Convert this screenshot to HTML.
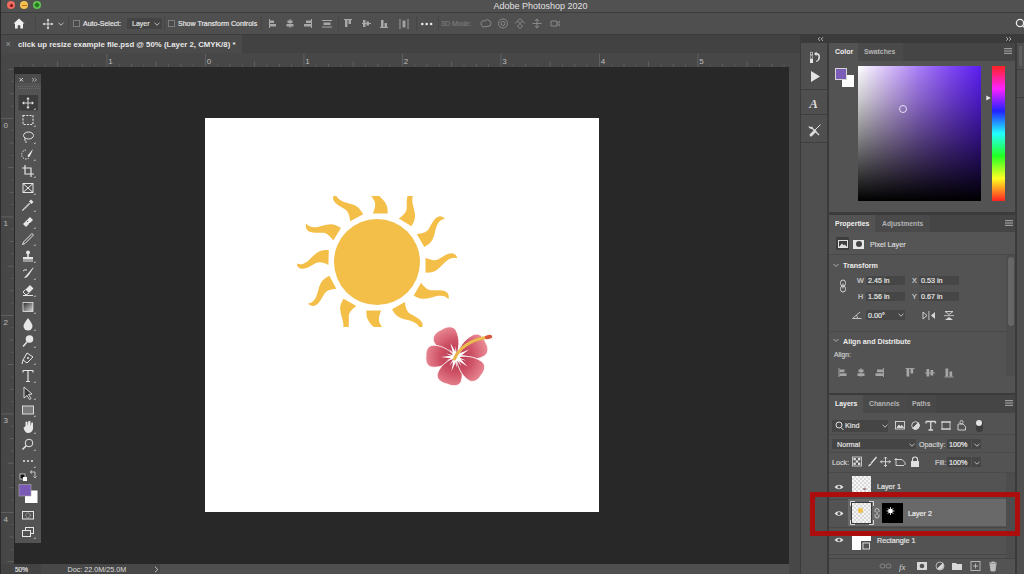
<!DOCTYPE html>
<html><head><meta charset="utf-8">
<style>
*{margin:0;padding:0;box-sizing:border-box}
html,body{width:1024px;height:574px;overflow:hidden;background:#282828;font-family:"Liberation Sans",sans-serif;color:#d8d8d8}
.a{position:absolute}
.t{position:absolute;white-space:nowrap;line-height:1}
#title{left:0;top:0;width:1024px;height:13px;background:#515151;border-bottom:1px solid #3c3c3c}
#opts{left:0;top:13px;width:1024px;height:21px;background:#4f4f4f}
#tabs{left:0;top:34px;width:1024px;height:19px;background:#424242;border-top:1px solid #3c3c3c}
#tab1{left:0;top:35px;width:242px;height:18px;background:#4a4a4a}
#rulerT{left:0;top:53px;width:790px;height:14px;background:#474747}
#rulerL{left:0;top:54px;width:14px;height:510px;background:#474747}
#status{left:0;top:564px;width:789px;height:10px;background:#474747}
#doc{left:205px;top:118px;width:394px;height:394px;background:#fff}
#vscroll{left:789px;top:53px;width:11px;height:521px;background:#474747}
#dock{left:800px;top:34px;width:224px;height:540px;background:#3b3b3b}
#iconcol{left:801px;top:43px;width:26px;height:531px;background:#4e4e4e}
#colorp{left:829px;top:43px;width:186px;height:169px;background:#535353}
#propp{left:829px;top:214px;width:186px;height:178px;background:#535353}
#layersp{left:829px;top:394px;width:186px;height:180px;background:#535353}
#tools{left:15px;top:74px;width:26px;height:469px;background:#535353}
.n{transform:scaleX(0.9);transform-origin:0 0;-webkit-text-stroke:0.2px currentColor}
.b{transform:scaleX(0.85);transform-origin:0 0;font-weight:bold}
.sep{position:absolute;width:1px;background:#464646;top:16px;height:15px}
</style></head>
<body>
<!-- TITLE BAR -->
<div id="title" class="a"></div>
<div class="a" style="left:7px;top:1px;width:8px;height:8px;border-radius:50%;background:#ee6b60"><div class="a" style="left:2.5px;top:2.5px;width:3px;height:3px;border-radius:50%;background:#7a1010"></div></div>
<div class="a" style="left:20px;top:1px;width:8px;height:8px;border-radius:50%;background:#f5c04f"><div class="a" style="left:1.5px;top:3.5px;width:5px;height:1px;background:#b07a10"></div></div>
<div class="a" style="left:33px;top:1px;width:8px;height:8px;border-radius:50%;background:#62c554"><div class="a" style="left:2px;top:2px;width:4px;height:4px;background:#1e7a1a;transform:rotate(45deg)"></div></div>
<div class="t" style="left:493.5px;top:2px;font-size:9px;color:#e0e0e0">Adobe Photoshop 2020</div>

<!-- OPTIONS BAR -->
<div id="opts" class="a"></div>
<div class="sep" style="left:35px"></div>
<div class="sep" style="left:68px"></div>
<div class="sep" style="left:164px"></div>
<div class="sep" style="left:261px"></div>
<div class="sep" style="left:338px"></div>
<div class="sep" style="left:416px"></div>
<div class="sep" style="left:438px"></div>
<svg class="a" style="left:13px;top:18px" width="12" height="11" viewBox="0 0 12 11"><path d="M6 0.5 L11.5 5.5 L10 5.5 L10 10.5 L7.3 10.5 L7.3 7.3 L4.7 7.3 L4.7 10.5 L2 10.5 L2 5.5 L0.5 5.5 Z" fill="#f0f0f0"/></svg>
<svg class="a" style="left:41.5px;top:18px" width="12" height="12" viewBox="0 0 12 12"><path d="M6 2V10M2 6H10" stroke="#e8e8e8" stroke-width="0.9"/><path d="M6 0.5L7.6 2.6H4.4Z M6 11.5L7.6 9.4H4.4Z M0.5 6L2.6 4.4V7.6Z M11.5 6L9.4 4.4V7.6Z" fill="#e8e8e8"/></svg>
<svg class="a" style="left:58px;top:22px" width="6" height="4" viewBox="0 0 6 4"><path d="M0.5 0.8L3 3.2L5.5 0.8" fill="none" stroke="#c8c8c8" stroke-width="0.9"/></svg>
<div class="a" style="left:73px;top:20px;width:7px;height:7px;border:1px solid #7e7e7e;background:#4a4a4a"></div>
<div class="t n" style="left:83px;top:19.5px;font-size:7.8px;color:#e6e6e6">Auto-Select:</div>
<div class="a" style="left:127px;top:17.5px;width:35px;height:11.5px;background:#434343;border-radius:1px"></div>
<div class="t n" style="left:131.5px;top:19.5px;font-size:7.8px;color:#e0e0e0">Layer</div>
<svg class="a" style="left:154px;top:22px" width="6" height="4" viewBox="0 0 6 4"><path d="M0.5 0.8L3 3.2L5.5 0.8" fill="none" stroke="#c8c8c8" stroke-width="0.9"/></svg>
<div class="a" style="left:168px;top:20px;width:7px;height:7px;border:1px solid #7e7e7e;background:#4a4a4a"></div>
<div class="t n" style="left:177.5px;top:19.5px;font-size:7.8px;color:#e6e6e6">Show Transform Controls</div>
<svg class="a" style="left:268px;top:19px" width="120" height="10" viewBox="0 0 120 10" fill="#a8a8a8">
 <rect x="1" y="0" width="1" height="9"/><rect x="2" y="1.5" width="4" height="2.5"/><rect x="2" y="5" width="6" height="2.5"/>
 <rect x="21.5" y="0" width="1" height="9"/><rect x="19.5" y="1.5" width="5" height="2.5"/><rect x="18.5" y="5" width="7" height="2.5"/>
 <rect x="43" y="0" width="1" height="9"/><rect x="38" y="1.5" width="5" height="2.5"/><rect x="36" y="5" width="7" height="2.5"/>
 <rect x="54" y="1" width="10" height="1"/><rect x="55.5" y="3.5" width="7" height="2.5"/><rect x="54" y="7.5" width="10" height="1"/>
 <rect x="76" y="0" width="8" height="1"/><rect x="77" y="1" width="2.5" height="7"/><rect x="80.5" y="1" width="2.5" height="4"/>
 <rect x="94" y="4" width="9" height="1"/><rect x="95" y="1" width="2.5" height="7"/><rect x="98.5" y="2.5" width="2.5" height="4"/>
 <rect x="112" y="8" width="8" height="1"/><rect x="113" y="1" width="2.5" height="7"/><rect x="116.5" y="4" width="2.5" height="4"/>
</svg>
<svg class="a" style="left:399px;top:19px" width="10" height="10" viewBox="0 0 10 10" fill="#a0a0a0"><rect x="0.5" y="0" width="1" height="10"/><rect x="8.5" y="0" width="1" height="10"/><rect x="3.5" y="1.5" width="3" height="7"/></svg>
<svg class="a" style="left:420px;top:21px" width="14" height="6" fill="#e8e8e8"><circle cx="2.3" cy="3" r="1.3"/><circle cx="6.7" cy="3" r="1.3"/><circle cx="11.1" cy="3" r="1.3"/></svg>
<div class="t n" style="left:440.5px;top:19.5px;font-size:7.8px;color:#7a7a7a">3D Mode:</div>
<svg class="a" style="left:480px;top:17px" width="80" height="13" viewBox="0 0 80 13" fill="none" stroke="#8a8a8a" stroke-width="1">
 <path d="M1 7 Q1 3 5 4 Q7 1 10 4 Q12 6 10 9 L3 10 Q1 9 1 7Z"/>
 <circle cx="23" cy="6.5" r="4.5"/><circle cx="23" cy="6.5" r="2"/>
 <path d="M40 1.5L42.5 4L40 6.5L37.5 4Z M40 6.5L42.5 9L40 11.5L37.5 9Z M35 6.5L37.5 4 M45 6.5L42.5 4"/>
 <path d="M57 2V11 M52.5 6.5H61.5 M55 4L57 2L59 4 M55 9L57 11L59 9"/>
 <path d="M71 4H77V9H71Z M77 6.5L80 4V9Z"/>
</svg>
<svg class="a" style="left:1015px;top:18px" width="12" height="12" viewBox="0 0 12 12" fill="none" stroke="#e8e8e8" stroke-width="1.3"><circle cx="5" cy="5" r="3.6"/><path d="M7.6 7.6L11 11"/></svg>

<!-- TAB BAR -->
<div id="tabs" class="a"></div>
<div id="tab1" class="a"></div>
<div class="t" style="left:5.5px;top:39.5px;font-size:9px;color:#9a9a9a">×</div>
<div class="t" style="left:17.5px;top:40.5px;font-size:8px;font-weight:bold;color:#e8e8e8;transform:scaleX(0.975);transform-origin:0 0">click up resize example file.psd @ 50% (Layer 2, CMYK/8) *</div>

<!-- RULERS -->
<div id="rulerT" class="a"></div>
<div id="rulerL" class="a"></div>
<svg class="a" style="left:0;top:54px" width="789" height="13"><rect x="20.3" y="10.5" width="0.8" height="2" fill="#666666"/><rect x="32.6" y="9.5" width="0.8" height="3" fill="#666666"/><rect x="44.9" y="10.5" width="0.8" height="2" fill="#666666"/><rect x="57.2" y="7.5" width="0.8" height="5" fill="#666666"/><rect x="69.6" y="10.5" width="0.8" height="2" fill="#666666"/><rect x="81.9" y="9.5" width="0.8" height="3" fill="#666666"/><rect x="94.2" y="10.5" width="0.8" height="2" fill="#666666"/><rect x="106.5" y="-0.5" width="0.8" height="13" fill="#666666"/><text x="108.3" y="10" font-size="8" fill="#bdbdbd" font-family="Liberation Sans">1</text><rect x="118.8" y="10.5" width="0.8" height="2" fill="#666666"/><rect x="131.1" y="9.5" width="0.8" height="3" fill="#666666"/><rect x="143.4" y="10.5" width="0.8" height="2" fill="#666666"/><rect x="155.8" y="7.5" width="0.8" height="5" fill="#666666"/><rect x="168.1" y="10.5" width="0.8" height="2" fill="#666666"/><rect x="180.4" y="9.5" width="0.8" height="3" fill="#666666"/><rect x="192.7" y="10.5" width="0.8" height="2" fill="#666666"/><rect x="205.0" y="-0.5" width="0.8" height="13" fill="#666666"/><text x="206.8" y="10" font-size="8" fill="#bdbdbd" font-family="Liberation Sans">0</text><rect x="217.3" y="10.5" width="0.8" height="2" fill="#666666"/><rect x="229.6" y="9.5" width="0.8" height="3" fill="#666666"/><rect x="241.9" y="10.5" width="0.8" height="2" fill="#666666"/><rect x="254.2" y="7.5" width="0.8" height="5" fill="#666666"/><rect x="266.6" y="10.5" width="0.8" height="2" fill="#666666"/><rect x="278.9" y="9.5" width="0.8" height="3" fill="#666666"/><rect x="291.2" y="10.5" width="0.8" height="2" fill="#666666"/><rect x="303.5" y="-0.5" width="0.8" height="13" fill="#666666"/><text x="305.3" y="10" font-size="8" fill="#bdbdbd" font-family="Liberation Sans">1</text><rect x="315.8" y="10.5" width="0.8" height="2" fill="#666666"/><rect x="328.1" y="9.5" width="0.8" height="3" fill="#666666"/><rect x="340.4" y="10.5" width="0.8" height="2" fill="#666666"/><rect x="352.8" y="7.5" width="0.8" height="5" fill="#666666"/><rect x="365.1" y="10.5" width="0.8" height="2" fill="#666666"/><rect x="377.4" y="9.5" width="0.8" height="3" fill="#666666"/><rect x="389.7" y="10.5" width="0.8" height="2" fill="#666666"/><rect x="402.0" y="-0.5" width="0.8" height="13" fill="#666666"/><text x="403.8" y="10" font-size="8" fill="#bdbdbd" font-family="Liberation Sans">2</text><rect x="414.3" y="10.5" width="0.8" height="2" fill="#666666"/><rect x="426.6" y="9.5" width="0.8" height="3" fill="#666666"/><rect x="438.9" y="10.5" width="0.8" height="2" fill="#666666"/><rect x="451.2" y="7.5" width="0.8" height="5" fill="#666666"/><rect x="463.6" y="10.5" width="0.8" height="2" fill="#666666"/><rect x="475.9" y="9.5" width="0.8" height="3" fill="#666666"/><rect x="488.2" y="10.5" width="0.8" height="2" fill="#666666"/><rect x="500.5" y="-0.5" width="0.8" height="13" fill="#666666"/><text x="502.3" y="10" font-size="8" fill="#bdbdbd" font-family="Liberation Sans">3</text><rect x="512.8" y="10.5" width="0.8" height="2" fill="#666666"/><rect x="525.1" y="9.5" width="0.8" height="3" fill="#666666"/><rect x="537.4" y="10.5" width="0.8" height="2" fill="#666666"/><rect x="549.8" y="7.5" width="0.8" height="5" fill="#666666"/><rect x="562.1" y="10.5" width="0.8" height="2" fill="#666666"/><rect x="574.4" y="9.5" width="0.8" height="3" fill="#666666"/><rect x="586.7" y="10.5" width="0.8" height="2" fill="#666666"/><rect x="599.0" y="-0.5" width="0.8" height="13" fill="#666666"/><text x="600.8" y="10" font-size="8" fill="#bdbdbd" font-family="Liberation Sans">4</text><rect x="611.3" y="10.5" width="0.8" height="2" fill="#666666"/><rect x="623.6" y="9.5" width="0.8" height="3" fill="#666666"/><rect x="635.9" y="10.5" width="0.8" height="2" fill="#666666"/><rect x="648.2" y="7.5" width="0.8" height="5" fill="#666666"/><rect x="660.6" y="10.5" width="0.8" height="2" fill="#666666"/><rect x="672.9" y="9.5" width="0.8" height="3" fill="#666666"/><rect x="685.2" y="10.5" width="0.8" height="2" fill="#666666"/><rect x="697.5" y="-0.5" width="0.8" height="13" fill="#666666"/><text x="699.3" y="10" font-size="8" fill="#bdbdbd" font-family="Liberation Sans">5</text><rect x="709.8" y="10.5" width="0.8" height="2" fill="#666666"/><rect x="722.1" y="9.5" width="0.8" height="3" fill="#666666"/><rect x="734.4" y="10.5" width="0.8" height="2" fill="#666666"/><rect x="746.8" y="7.5" width="0.8" height="5" fill="#666666"/><rect x="759.1" y="10.5" width="0.8" height="2" fill="#666666"/><rect x="771.4" y="9.5" width="0.8" height="3" fill="#666666"/><rect x="783.7" y="10.5" width="0.8" height="2" fill="#666666"/></svg>
<svg class="a" style="left:0;top:54px" width="14" height="510"><rect x="7.5" y="14.8" width="6" height="0.8" fill="#666666"/><rect x="11.5" y="27.1" width="2" height="0.8" fill="#666666"/><rect x="9.5" y="39.4" width="4" height="0.8" fill="#666666"/><rect x="11.5" y="51.7" width="2" height="0.8" fill="#666666"/><rect x="-0.5" y="64.0" width="14" height="0.8" fill="#666666"/><text x="3.5" y="73.8" font-size="8" fill="#bdbdbd" font-family="Liberation Sans">0</text><rect x="11.5" y="76.3" width="2" height="0.8" fill="#666666"/><rect x="9.5" y="88.6" width="4" height="0.8" fill="#666666"/><rect x="11.5" y="100.9" width="2" height="0.8" fill="#666666"/><rect x="7.5" y="113.2" width="6" height="0.8" fill="#666666"/><rect x="11.5" y="125.6" width="2" height="0.8" fill="#666666"/><rect x="9.5" y="137.9" width="4" height="0.8" fill="#666666"/><rect x="11.5" y="150.2" width="2" height="0.8" fill="#666666"/><rect x="-0.5" y="162.5" width="14" height="0.8" fill="#666666"/><text x="3.5" y="172.3" font-size="8" fill="#bdbdbd" font-family="Liberation Sans">1</text><rect x="11.5" y="174.8" width="2" height="0.8" fill="#666666"/><rect x="9.5" y="187.1" width="4" height="0.8" fill="#666666"/><rect x="11.5" y="199.4" width="2" height="0.8" fill="#666666"/><rect x="7.5" y="211.8" width="6" height="0.8" fill="#666666"/><rect x="11.5" y="224.1" width="2" height="0.8" fill="#666666"/><rect x="9.5" y="236.4" width="4" height="0.8" fill="#666666"/><rect x="11.5" y="248.7" width="2" height="0.8" fill="#666666"/><rect x="-0.5" y="261.0" width="14" height="0.8" fill="#666666"/><text x="3.5" y="270.8" font-size="8" fill="#bdbdbd" font-family="Liberation Sans">2</text><rect x="11.5" y="273.3" width="2" height="0.8" fill="#666666"/><rect x="9.5" y="285.6" width="4" height="0.8" fill="#666666"/><rect x="11.5" y="297.9" width="2" height="0.8" fill="#666666"/><rect x="7.5" y="310.2" width="6" height="0.8" fill="#666666"/><rect x="11.5" y="322.6" width="2" height="0.8" fill="#666666"/><rect x="9.5" y="334.9" width="4" height="0.8" fill="#666666"/><rect x="11.5" y="347.2" width="2" height="0.8" fill="#666666"/><rect x="-0.5" y="359.5" width="14" height="0.8" fill="#666666"/><text x="3.5" y="369.3" font-size="8" fill="#bdbdbd" font-family="Liberation Sans">3</text><rect x="11.5" y="371.8" width="2" height="0.8" fill="#666666"/><rect x="9.5" y="384.1" width="4" height="0.8" fill="#666666"/><rect x="11.5" y="396.4" width="2" height="0.8" fill="#666666"/><rect x="7.5" y="408.8" width="6" height="0.8" fill="#666666"/><rect x="11.5" y="421.1" width="2" height="0.8" fill="#666666"/><rect x="9.5" y="433.4" width="4" height="0.8" fill="#666666"/><rect x="11.5" y="445.7" width="2" height="0.8" fill="#666666"/><rect x="-0.5" y="458.0" width="14" height="0.8" fill="#666666"/><text x="3.5" y="467.8" font-size="8" fill="#bdbdbd" font-family="Liberation Sans">4</text><rect x="11.5" y="470.3" width="2" height="0.8" fill="#666666"/><rect x="9.5" y="482.6" width="4" height="0.8" fill="#666666"/><rect x="11.5" y="494.9" width="2" height="0.8" fill="#666666"/><rect x="7.5" y="507.2" width="6" height="0.8" fill="#666666"/></svg>

<!-- STATUS -->
<div id="status" class="a"></div>
<div class="a" style="left:0;top:564px;width:41px;height:10px;background:#434343"></div>
<div class="a" style="left:41px;top:564px;width:119px;height:10px;background:#484848"></div>
<div class="a" style="left:160px;top:564px;width:629px;height:10px;background:#4f4f4f"></div>
<div class="t n" style="left:14.5px;top:566px;font-size:7.2px;color:#e0e0e0">50%</div>
<div class="t" style="left:67.5px;top:566px;font-size:7.2px;color:#dcdcdc">Doc: 22.0M/25.0M</div>
<svg class="a" style="left:154px;top:566px" width="5" height="7"><path d="M1 0.8L3.8 3.5L1 6.2" fill="none" stroke="#d0d0d0" stroke-width="0.9"/></svg>
<div class="a" style="left:0;top:0;width:1px;height:574px;background:#2c2a2e"></div>

<!-- DOCUMENT -->
<div id="doc" class="a"></div>
<svg class="a" style="left:205px;top:118px" width="394" height="394"><defs><clipPath id="sc"><rect x="92" y="78" width="160" height="131"/></clipPath></defs><g clip-path="url(#sc)"><circle cx="172" cy="144" r="43" fill="#f4bf49"/><path d="M48.5 -3.4 C53 -1.8 57 -0.5 61 -2 C66 -4.5 70 -7.5 75 -7.5 C78 -7.3 80 -5 80.5 -2.8 C77 -4 74 -3.5 70 -1 C66 1.5 63 6.5 57 8.8 C54 9.8 51 9.9 48.5 9.8 Z" fill="#f4bf49" transform="translate(172,144) rotate(0) translate(0,3) scale(1,1.12) translate(0,-3)"/><path d="M48.5 -3.4 C53 -1.8 57 -0.5 61 -2 C66 -4.5 70 -7.5 75 -7.5 C78 -7.3 80 -5 80.5 -2.8 C77 -4 74 -3.5 70 -1 C66 1.5 63 6.5 57 8.8 C54 9.8 51 9.9 48.5 9.8 Z" fill="#f4bf49" transform="translate(172,144) rotate(30) translate(0,3) scale(1,1.12) translate(0,-3)"/><path d="M48.5 -3.4 C53 -1.8 57 -0.5 61 -2 C66 -4.5 70 -7.5 75 -7.5 C78 -7.3 80 -5 80.5 -2.8 C77 -4 74 -3.5 70 -1 C66 1.5 63 6.5 57 8.8 C54 9.8 51 9.9 48.5 9.8 Z" fill="#f4bf49" transform="translate(172,144) rotate(60) translate(0,3) scale(1,1.12) translate(0,-3)"/><path d="M48.5 -3.4 C53 -1.8 57 -0.5 61 -2 C66 -4.5 70 -7.5 75 -7.5 C78 -7.3 80 -5 80.5 -2.8 C77 -4 74 -3.5 70 -1 C66 1.5 63 6.5 57 8.8 C54 9.8 51 9.9 48.5 9.8 Z" fill="#f4bf49" transform="translate(172,144) rotate(90) translate(0,3) scale(1,1.12) translate(0,-3)"/><path d="M48.5 -3.4 C53 -1.8 57 -0.5 61 -2 C66 -4.5 70 -7.5 75 -7.5 C78 -7.3 80 -5 80.5 -2.8 C77 -4 74 -3.5 70 -1 C66 1.5 63 6.5 57 8.8 C54 9.8 51 9.9 48.5 9.8 Z" fill="#f4bf49" transform="translate(172,144) rotate(120) translate(0,3) scale(1,1.12) translate(0,-3)"/><path d="M48.5 -3.4 C53 -1.8 57 -0.5 61 -2 C66 -4.5 70 -7.5 75 -7.5 C78 -7.3 80 -5 80.5 -2.8 C77 -4 74 -3.5 70 -1 C66 1.5 63 6.5 57 8.8 C54 9.8 51 9.9 48.5 9.8 Z" fill="#f4bf49" transform="translate(172,144) rotate(151.5) translate(0,3) scale(1,1.12) translate(0,-3)"/><path d="M48.5 -3.4 C53 -1.8 57 -0.5 61 -2 C66 -4.5 70 -7.5 75 -7.5 C78 -7.3 80 -5 80.5 -2.8 C77 -4 74 -3.5 70 -1 C66 1.5 63 6.5 57 8.8 C54 9.8 51 9.9 48.5 9.8 Z" fill="#f4bf49" transform="translate(172,144) rotate(181.5) translate(0,3) scale(1,1.12) translate(0,-3)"/><path d="M48.5 -3.4 C53 -1.8 57 -0.5 61 -2 C66 -4.5 70 -7.5 75 -7.5 C78 -7.3 80 -5 80.5 -2.8 C77 -4 74 -3.5 70 -1 C66 1.5 63 6.5 57 8.8 C54 9.8 51 9.9 48.5 9.8 Z" fill="#f4bf49" transform="translate(172,144) rotate(211.0) translate(0,3) scale(1,1.12) translate(0,-3)"/><path d="M48.5 -3.4 C53 -1.8 57 -0.5 61 -2 C66 -4.5 70 -7.5 75 -7.5 C78 -7.3 80 -5 80.5 -2.8 C77 -4 74 -3.5 70 -1 C66 1.5 63 6.5 57 8.8 C54 9.8 51 9.9 48.5 9.8 Z" fill="#f4bf49" transform="translate(172,144) rotate(241.5) translate(0,3) scale(1,1.12) translate(0,-3)"/><path d="M48.5 -3.4 C53 -1.8 57 -0.5 61 -2 C66 -4.5 70 -7.5 75 -7.5 C78 -7.3 80 -5 80.5 -2.8 C77 -4 74 -3.5 70 -1 C66 1.5 63 6.5 57 8.8 C54 9.8 51 9.9 48.5 9.8 Z" fill="#f4bf49" transform="translate(172,144) rotate(270) translate(0,3) scale(1,1.12) translate(0,-3)"/><path d="M48.5 -3.4 C53 -1.8 57 -0.5 61 -2 C66 -4.5 70 -7.5 75 -7.5 C78 -7.3 80 -5 80.5 -2.8 C77 -4 74 -3.5 70 -1 C66 1.5 63 6.5 57 8.8 C54 9.8 51 9.9 48.5 9.8 Z" fill="#f4bf49" transform="translate(172,144) rotate(301.5) translate(0,3) scale(1,1.12) translate(0,-3)"/><path d="M48.5 -3.4 C53 -1.8 57 -0.5 61 -2 C66 -4.5 70 -7.5 75 -7.5 C78 -7.3 80 -5 80.5 -2.8 C77 -4 74 -3.5 70 -1 C66 1.5 63 6.5 57 8.8 C54 9.8 51 9.9 48.5 9.8 Z" fill="#f4bf49" transform="translate(172,144) rotate(330) translate(0,3) scale(1,1.12) translate(0,-3)"/></g><defs><radialGradient id="pg" gradientUnits="userSpaceOnUse" cx="0" cy="0" r="32"><stop offset="0" stop-color="#b3344c"/><stop offset="0.5" stop-color="#cd5064"/><stop offset="1" stop-color="#e98a94"/></radialGradient></defs><path d="M0 0 C6.2 -6.9 14.0 -12.5 23.2 -12.5 C29.4 -12.5 31.6 -6.2 31.0 0 C31.6 6.2 29.4 12.5 23.2 12.5 C14.0 12.5 6.2 6.9 0 0Z" fill="url(#pg)" stroke="#fff" stroke-width="0.8" transform="translate(251,239) rotate(-118)"/><path d="M0 0 C6.6 -6.6 14.8 -12.0 24.8 -12.0 C31.3 -12.0 33.7 -6.0 33.0 0 C33.7 6.0 31.3 12.0 24.8 12.0 C14.8 12.0 6.6 6.6 0 0Z" fill="url(#pg)" stroke="#fff" stroke-width="0.8" transform="translate(251,239) rotate(-27)"/><path d="M0 0 C6.0 -6.1 13.5 -11.0 22.5 -11.0 C28.5 -11.0 30.6 -5.5 30.0 0 C30.6 5.5 28.5 11.0 22.5 11.0 C13.5 11.0 6.0 6.1 0 0Z" fill="url(#pg)" stroke="#fff" stroke-width="0.8" transform="translate(251,239) rotate(182)"/><path d="M0 0 C5.7 -6.9 12.8 -12.5 21.4 -12.5 C27.1 -12.5 29.1 -6.2 28.5 0 C29.1 6.2 27.1 12.5 21.4 12.5 C12.8 12.5 5.7 6.9 0 0Z" fill="url(#pg)" stroke="#fff" stroke-width="0.8" transform="translate(251,239) rotate(108)"/><path d="M0 0 C6.2 -6.3 14.0 -11.5 23.2 -11.5 C29.4 -11.5 31.6 -5.8 31.0 0 C31.6 5.8 29.4 11.5 23.2 11.5 C14.0 11.5 6.2 6.3 0 0Z" fill="url(#pg)" stroke="#fff" stroke-width="0.8" transform="translate(251,239) rotate(36)"/><path d="M252.9 238.3 L245.4 225.1 L249.1 239.7Z" fill="#fff"/><path d="M251.9 238.2 L243.6 230.8 L250.1 239.8Z" fill="#fff"/><path d="M252.2 239.0 L250.6 228.0 L249.8 239.0Z" fill="#fff"/><path d="M252.0 240.7 L264.0 231.5 L250.0 237.3Z" fill="#fff"/><path d="M251.9 239.8 L258.1 230.6 L250.1 238.2Z" fill="#fff"/><path d="M251.2 240.2 L261.8 237.1 L250.8 237.8Z" fill="#fff"/><path d="M251.0 237.0 L236.0 239.0 L251.0 241.0Z" fill="#fff"/><path d="M250.6 237.9 L240.7 242.8 L251.4 240.1Z" fill="#fff"/><path d="M251.4 237.9 L240.7 235.2 L250.6 240.1Z" fill="#fff"/><path d="M249.1 238.4 L246.4 253.3 L252.9 239.6Z" fill="#fff"/><path d="M249.8 239.0 L251.4 250.0 L252.2 239.0Z" fill="#fff"/><path d="M250.1 238.3 L244.2 247.7 L251.9 239.7Z" fill="#fff"/><path d="M249.7 240.5 L262.5 248.6 L252.3 237.5Z" fill="#fff"/><path d="M250.6 240.1 L261.3 242.8 L251.4 237.9Z" fill="#fff"/><path d="M250.0 239.6 L256.5 248.5 L252.0 238.4Z" fill="#fff"/><circle cx="251" cy="239" r="4" fill="#fff"/><path d="M249.5 241 C253 231 265 222 281 219.5" stroke="#e9b447" stroke-width="3" fill="none" stroke-linecap="round"/><path d="M253 234 C259 226 267 222 281 219.5" stroke="#f0c85a" stroke-width="1" fill="none"/><ellipse cx="283.5" cy="219" rx="3.8" ry="2.1" fill="#d8553f" transform="rotate(-10 283.5 219)"/></svg>

<!-- DOCK -->
<div id="vscroll" class="a"></div>
<div id="dock" class="a"></div>
<!-- dock header -->
<div class="a" style="left:800px;top:34px;width:224px;height:9px;background:#3b3b3b"></div>
<svg class="a" style="left:817px;top:36px" width="8" height="6" viewBox="0 0 8 6" fill="none" stroke="#c4c4c4" stroke-width="0.9"><path d="M3 1.2L1.2 3L3 4.8M6 1.2L4.2 3L6 4.8"/></svg>
<svg class="a" style="left:1005px;top:36px" width="8" height="6" viewBox="0 0 8 6" fill="none" stroke="#c4c4c4" stroke-width="0.9"><path d="M1.2 1.2L3 3L1.2 4.8M4.2 1.2L6 3L4.2 4.8"/></svg>
<!-- icon column -->
<div class="a" style="left:801px;top:43px;width:26px;height:531px;background:#4f4f4f"></div>
<div class="a" style="left:801px;top:89px;width:26px;height:1px;background:#3e3e3e"></div>
<div class="a" style="left:801px;top:114px;width:26px;height:1px;background:#3e3e3e"></div>
<div class="a" style="left:801px;top:142px;width:26px;height:1px;background:#3e3e3e"></div>
<svg class="a" style="left:801px;top:43px" width="26" height="100" fill="#e4e4e4">
 <rect x="9" y="9" width="3" height="3"/><rect x="9" y="12.5" width="3" height="3"/><rect x="9" y="16" width="3" height="4"/>
 <rect x="9.5" y="9.5" width="2" height="2" fill="#4f4f4f"/><rect x="9.5" y="13" width="2" height="2" fill="#4f4f4f"/>
 <path d="M13 11 L15.5 8.5 L15.5 10 Q19 10 19 14 Q19 18 15 19 L15 18 Q17.5 17 17.5 14 Q17.5 11.5 15.5 11.5 L15.5 13Z"/>
 <path d="M10 28 L19 33.5 L10 39Z"/>
 <text x="8.3" y="65.3" font-family="Liberation Serif" font-weight="bold" font-style="italic" font-size="13" fill="#dcdcdc">A</text>
 <path d="M10.5 84.5 L18 92" stroke="#dcdcdc" stroke-width="1.3" fill="none"/>
 <path d="M7.5 83 A3 3 0 0 0 12 85.5 L11 83.5 L9.5 84 Z" fill="#dcdcdc"/>
 <path d="M19.5 81.5 L13.5 87.5" stroke="#dcdcdc" stroke-width="1" fill="none"/>
 <path d="M13.8 86.2 L9 91 A1.4 1.4 0 0 0 11 93 L15.8 88.2Z" fill="#dcdcdc"/>
</svg>
<!-- separator column between icon col and panels -->
<div class="a" style="left:827px;top:43px;width:2px;height:531px;background:#3b3b3b"></div>
<!-- right edge column -->
<div class="a" style="left:1015px;top:43px;width:2px;height:531px;background:#3b3b3b"></div>
<div class="a" style="left:1017px;top:43px;width:7px;height:531px;background:#4f4f4f"></div>
<div class="a" style="left:1017px;top:69px;width:7px;height:1px;background:#3f3f3f"></div>
<div class="a" style="left:1017px;top:97px;width:7px;height:1px;background:#3f3f3f"></div>
<div class="a" style="left:1019px;top:46px;width:3px;height:20px;background:#5e5e5e;border-radius:1px"></div>

<!-- ================= COLOR PANEL ================= -->
<div class="a" style="left:829px;top:43px;width:186px;height:169px;background:#535353"></div>
<div class="a" style="left:858px;top:43px;width:157px;height:18px;background:#454545"></div>
<div class="a" style="left:858px;top:43px;width:45px;height:18px;background:#4a4a4a"></div>
<div class="t b" style="left:834.5px;top:48.18px;font-size:7.4px;color:#f0f0f0;transform:scaleX(0.942)">Color</div>
<div class="t b" style="left:864px;top:48.18px;font-size:7.4px;color:#b4b4b4;transform:scaleX(0.920)">Swatches</div>
<svg class="a" style="left:1004px;top:48px" width="9" height="7" fill="#9a9a9a"><rect x="0" y="0" width="8" height="1.2"/><rect x="0" y="2.4" width="8" height="1.2"/><rect x="0" y="4.8" width="8" height="1.2"/></svg>
<div class="a" style="left:842px;top:75px;width:12px;height:12px;background:#fff"></div>
<div class="a" style="left:835px;top:68px;width:12px;height:12px;background:#7b5cb6;border:1px solid #d4d4d4"></div>
<div class="a" style="left:858px;top:66px;width:123px;height:135px;background:linear-gradient(to bottom,rgba(0,0,0,0) 0%,rgba(0,0,0,.2) 25%,rgba(0,0,0,.45) 50%,rgba(0,0,0,.72) 75%,#000 100%),linear-gradient(to right,#fff 0%,#d6bcfb 25%,#a87cf7 50%,#8048f4 75%,#5a1ef0 100%)"></div>
<div class="a" style="left:899px;top:105px;width:8px;height:8px;border-radius:50%;border:1px solid #e6e0f0"></div>
<div class="a" style="left:992px;top:66px;width:13px;height:135px;background:linear-gradient(to bottom,#f22 0%,#f2f 16.7%,#22f 33.3%,#2ff 50%,#2f2 66.7%,#ff2 83.3%,#f22 100%)"></div>
<svg class="a" style="left:985.5px;top:95px" width="6" height="7"><path d="M0.3 0.5 L4.8 3 L0.3 5.5Z" fill="#e8e8e8"/></svg>

<!-- ================= PROPERTIES PANEL ================= -->
<div class="a" style="left:829px;top:215px;width:186px;height:178px;background:#535353"></div>
<div class="a" style="left:875px;top:215px;width:140px;height:17px;background:#454545"></div>
<div class="a" style="left:875px;top:215px;width:55px;height:17px;background:#4a4a4a"></div>
<div class="t b" style="left:834.5px;top:220.18px;font-size:7.4px;color:#f0f0f0;transform:scaleX(0.942)">Properties</div>
<div class="t b" style="left:881.5px;top:220.18px;font-size:7.4px;color:#b4b4b4;transform:scaleX(0.920)">Adjustments</div>
<svg class="a" style="left:1005px;top:220px" width="9" height="7" fill="#9a9a9a"><rect x="0" y="0" width="8" height="1.2"/><rect x="0" y="2.4" width="8" height="1.2"/><rect x="0" y="4.8" width="8" height="1.2"/></svg>
<div class="a" style="left:829px;top:232px;width:186px;height:22px;background:#555555"></div>
<div class="a" style="left:829px;top:253.5px;width:186px;height:1px;background:#484848"></div>
<div class="a" style="left:836px;top:237px;width:13px;height:13px;background:#3e3e3e"></div>
<svg class="a" style="left:838px;top:240px" width="10" height="8"><rect x="0.5" y="0.5" width="9" height="7" fill="none" stroke="#e0e0e0" stroke-width="1"/><path d="M1 7 L4 3.5 L6 5.5 L7 4.5 L9 7Z" fill="#e0e0e0"/></svg>
<div class="a" style="left:853px;top:240px;width:11px;height:8.5px;background:#e6e6e6"><div class="a" style="left:2.5px;top:1.2px;width:6px;height:6px;border-radius:50%;background:#444"></div></div>
<div class="t n" style="left:869.5px;top:241.01px;font-size:7.4px;color:#d8d8d8;transform:scaleX(0.973)">Pixel Layer</div>
<svg class="a" style="left:833px;top:263px" width="6" height="5"><path d="M0.5 1 L3 3.5 L5.5 1" fill="none" stroke="#bdbdbd" stroke-width="0.9"/></svg>
<div class="t b" style="left:842.5px;top:262px;font-size:7.6px;color:#ececec;transform:scaleX(0.94)">Transform</div>
<svg class="a" style="left:839px;top:279px" width="8" height="14" fill="none" stroke="#d0d0d0" stroke-width="1"><rect x="1.5" y="1" width="5" height="6" rx="2.5"/><rect x="1.5" y="7" width="5" height="6" rx="2.5"/><path d="M4 4.5V9.5"/></svg>
<div class="t n" style="left:856.5px;top:277.01px;font-size:7.4px;color:#cfcfcf;transform:scaleX(0.973)">W</div>
<div class="a" style="left:865.5px;top:275.5px;width:39.5px;height:9.5px;background:#464646"></div>
<div class="t n" style="left:868px;top:277.01px;font-size:7.4px;color:#e6e6e6;transform:scaleX(0.973)">2.45 in</div>
<div class="t n" style="left:912px;top:277.01px;font-size:7.4px;color:#cfcfcf;transform:scaleX(0.973)">X</div>
<div class="a" style="left:919px;top:275.5px;width:40px;height:9.5px;background:#464646"></div>
<div class="t n" style="left:921px;top:277.01px;font-size:7.4px;color:#e6e6e6;transform:scaleX(0.973)">0.53 in</div>
<div class="t n" style="left:857.5px;top:293.01px;font-size:7.4px;color:#cfcfcf;transform:scaleX(0.973)">H</div>
<div class="a" style="left:865.5px;top:291.5px;width:39.5px;height:9.5px;background:#464646"></div>
<div class="t n" style="left:868px;top:293.01px;font-size:7.4px;color:#e6e6e6;transform:scaleX(0.973)">1.56 in</div>
<div class="t n" style="left:912px;top:293.01px;font-size:7.4px;color:#cfcfcf;transform:scaleX(0.973)">Y</div>
<div class="a" style="left:919px;top:291.5px;width:40px;height:9.5px;background:#464646"></div>
<div class="t n" style="left:921px;top:293.01px;font-size:7.4px;color:#e6e6e6;transform:scaleX(0.973)">0.67 in</div>
<svg class="a" style="left:852px;top:311px" width="10" height="8" fill="none" stroke="#d0d0d0" stroke-width="0.9"><path d="M0.5 7.5 H9.5 M0.5 7.5 L8 1"/><path d="M5.5 7.5 Q5.5 5 4 4"/></svg>
<div class="a" style="left:865.5px;top:310px;width:30px;height:10px;background:#464646"></div>
<div class="a" style="left:896px;top:310px;width:9px;height:10px;background:#464646"></div>
<div class="t n" style="left:868px;top:311.51px;font-size:7.4px;color:#e6e6e6;transform:scaleX(0.973)">0.00°</div>
<svg class="a" style="left:898px;top:313px" width="6" height="4"><path d="M0.5 0.8L3 3.2L5.5 0.8" fill="none" stroke="#c8c8c8" stroke-width="0.9"/></svg>
<svg class="a" style="left:922px;top:310px" width="34" height="11" fill="#d8d8d8"><path d="M1 2 L5 5.5 L1 9Z" fill="none" stroke="#d8d8d8" stroke-width="0.9"/><rect x="6.5" y="1" width="0.8" height="9"/><path d="M13 2 L9 5.5 L13 9Z"/>
 <path d="M23 1.5 H31 L27 4.5Z" fill="none" stroke="#d8d8d8" stroke-width="0.9"/><rect x="22" y="5.3" width="10" height="0.8"/><path d="M23 10 H31 L27 7Z"/></svg>
<div class="a" style="left:1005.5px;top:255px;width:9.5px;height:121px;background:#4d4d4d"></div>
<div class="a" style="left:1007.5px;top:257px;width:6px;height:69px;border-radius:3px;background:#666"></div>
<div class="a" style="left:829px;top:330.5px;width:177px;height:1px;background:#484848"></div>
<svg class="a" style="left:833px;top:338px" width="6" height="5"><path d="M0.5 1 L3 3.5 L5.5 1" fill="none" stroke="#bdbdbd" stroke-width="0.9"/></svg>
<div class="t b" style="left:842.5px;top:337.5px;font-size:7.6px;color:#ececec;transform:scaleX(0.94)">Align and Distribute</div>
<div class="t n" style="left:834px;top:351px;font-size:7.5px;color:#cfcfcf">Align:</div>
<svg class="a" style="left:836px;top:367px" width="120" height="12" fill="#a6a6a6">
 <rect x="2.5" y="1" width="0.9" height="9"/><rect x="3.5" y="2.5" width="5" height="2.7"/><rect x="3.5" y="6.3" width="7" height="2.7"/>
 <rect x="24.5" y="1" width="0.9" height="9"/><rect x="22.5" y="2.5" width="5" height="2.7"/><rect x="21.5" y="6.3" width="7" height="2.7"/>
 <rect x="47" y="1" width="0.9" height="9"/><rect x="41" y="2.5" width="6" height="2.7"/><rect x="39.5" y="6.3" width="7.5" height="2.7"/>
 <rect x="69.5" y="1" width="9" height="0.9"/><rect x="70.5" y="2" width="2.7" height="7.5"/><rect x="74.5" y="2" width="2.7" height="4.5"/>
 <rect x="89" y="5.5" width="10" height="0.9"/><rect x="90.5" y="2" width="2.7" height="7.5"/><rect x="94.5" y="3" width="2.7" height="5.5"/>
 <rect x="108.5" y="9.5" width="9" height="0.9"/><rect x="109.5" y="1.5" width="2.7" height="8"/><rect x="113.5" y="4.5" width="2.7" height="5"/>
</svg>

<!-- ================= LAYERS PANEL ================= -->
<div class="a" style="left:829px;top:395px;width:186px;height:179px;background:#535353"></div>
<div class="a" style="left:863px;top:395px;width:152px;height:18px;background:#454545"></div>
<div class="a" style="left:863px;top:395px;width:44px;height:18px;background:#4a4a4a"></div>
<div class="a" style="left:907px;top:395px;width:29px;height:18px;background:#484848"></div>
<div class="t b" style="left:834.5px;top:400.18px;font-size:7.4px;color:#f0f0f0;transform:scaleX(0.942)">Layers</div>
<div class="t b" style="left:868.5px;top:400.18px;font-size:7.4px;color:#b4b4b4;transform:scaleX(0.920)">Channels</div>
<div class="t b" style="left:912px;top:400.18px;font-size:7.4px;color:#b4b4b4;transform:scaleX(0.920)">Paths</div>
<svg class="a" style="left:1005px;top:400px" width="9" height="7" fill="#9a9a9a"><rect x="0" y="0" width="8" height="1.2"/><rect x="0" y="2.4" width="8" height="1.2"/><rect x="0" y="4.8" width="8" height="1.2"/></svg>
<!-- filter row -->
<div class="a" style="left:832px;top:420px;width:56px;height:11.5px;background:#454545"></div>
<svg class="a" style="left:835px;top:421px" width="9" height="10" fill="none" stroke="#e0e0e0" stroke-width="1"><circle cx="4" cy="4" r="3"/><path d="M6 6.5L8.5 9"/></svg>
<div class="t n" style="left:844.5px;top:422.01px;font-size:7.4px;color:#e0e0e0;transform:scaleX(0.973)">Kind</div>
<svg class="a" style="left:882px;top:424px" width="6" height="4"><path d="M0.5 0.8L3 3.2L5.5 0.8" fill="none" stroke="#c8c8c8" stroke-width="0.9"/></svg>
<svg class="a" style="left:894px;top:419px" width="112" height="14" fill="none" stroke="#d8d8d8" stroke-width="0.9">
 <rect x="1.5" y="2.5" width="9" height="7.5"/><path d="M3 8.5 L5 6 L6.5 7.5 L8 6.5 L9.5 8.5Z" fill="#d8d8d8"/>
 <circle cx="21.5" cy="6.5" r="3.8"/><path d="M18.8 9.2 L24.2 3.8 A3.8 3.8 0 0 1 18.8 9.2Z" fill="#d8d8d8"/>
 <path d="M32 2.5H41.5M36.75 2.5V11M34.5 11H39M32 2.5V4.5M41.5 2.5V4.5" stroke-width="1.3"/>
 <rect x="48" y="3" width="8" height="7"/><path d="M47 3H57M47 10H57" stroke-width="1.2"/>
 <path d="M64 5H69L71.5 7.5V11H64Z"/><rect x="66" y="1.5" width="3" height="3.5" rx="1.5"/>
</svg>
<div class="a" style="left:976px;top:421px;width:6.5px;height:10.5px;border-radius:3px;background:#3c3c3c"></div>
<div class="a" style="left:975.7px;top:419.8px;width:6.6px;height:6.6px;border-radius:50%;background:#e4e4e4"></div>
<div class="a" style="left:829px;top:433.5px;width:186px;height:1px;background:#4a4a4a"></div>
<!-- blend row -->
<div class="a" style="left:832px;top:439px;width:84px;height:10px;background:#454545"></div>
<div class="t n" style="left:836.5px;top:440.51px;font-size:7.4px;color:#e0e0e0;transform:scaleX(0.973)">Normal</div>
<svg class="a" style="left:909px;top:442.5px" width="6" height="4"><path d="M0.5 0.8L3 3.2L5.5 0.8" fill="none" stroke="#c8c8c8" stroke-width="0.9"/></svg>
<div class="t n" style="left:919px;top:440.51px;font-size:7.4px;color:#cfcfcf;transform:scaleX(0.973)">Opacity:</div>
<div class="a" style="left:947px;top:439px;width:24px;height:10px;background:#454545"></div>
<div class="t n" style="left:949px;top:440.51px;font-size:7.4px;color:#e8e8e8;transform:scaleX(0.973)">100%</div>
<div class="a" style="left:972px;top:439px;width:9px;height:10px;background:#454545"></div>
<svg class="a" style="left:974px;top:442.5px" width="6" height="4"><path d="M0.5 0.8L3 3.2L5.5 0.8" fill="none" stroke="#c8c8c8" stroke-width="0.9"/></svg>
<div class="a" style="left:829px;top:451.5px;width:186px;height:1px;background:#4a4a4a"></div>
<!-- lock row -->
<div class="t n" style="left:832px;top:459.01px;font-size:7.4px;color:#cfcfcf;transform:scaleX(0.973)">Lock:</div>
<svg class="a" style="left:852px;top:456px" width="70" height="12" fill="#e0e0e0">
 <rect x="0.5" y="1" width="9" height="9" fill="none" stroke="#e0e0e0" stroke-width="0.8"/>
 <rect x="1.5" y="2" width="2.3" height="2.3"/><rect x="6" y="2" width="2.3" height="2.3"/><rect x="3.8" y="4.3" width="2.3" height="2.3"/><rect x="1.5" y="6.6" width="2.3" height="2.3"/><rect x="6" y="6.6" width="2.3" height="2.3"/>
 <path d="M24 0.5 L25 1.5 L19.5 8 L18.5 7Z"/><path d="M18.5 7.5 Q16.5 8.5 16 10.5 Q18.5 10 19.5 8.5Z"/>
 <path d="M33.5 1V10.5M28.5 5.75H38.5M32 2.5L33.5 1L35 2.5M32 9L33.5 10.5L35 9M30 4.25L28.5 5.75L30 7.25M37 4.25L38.5 5.75L37 7.25" fill="none" stroke="#e0e0e0" stroke-width="0.9"/>
 <path d="M44 2V9.5H52 M42.5 3.5H50L53 6.5V9" fill="none" stroke="#e0e0e0" stroke-width="0.9"/>
 <rect x="59" y="5" width="8" height="6"/><path d="M60.5 5V3.5A2.5 2.5 0 0 1 65.5 3.5V5" fill="none" stroke="#e0e0e0" stroke-width="1.1"/>
</svg>
<div class="t n" style="left:935px;top:459.01px;font-size:7.4px;color:#cfcfcf;transform:scaleX(0.973)">Fill:</div>
<div class="a" style="left:947px;top:457px;width:24px;height:10px;background:#454545"></div>
<div class="t n" style="left:949px;top:459.01px;font-size:7.4px;color:#e8e8e8;transform:scaleX(0.973)">100%</div>
<div class="a" style="left:972px;top:457px;width:9px;height:10px;background:#454545"></div>
<svg class="a" style="left:974px;top:460.5px" width="6" height="4"><path d="M0.5 0.8L3 3.2L5.5 0.8" fill="none" stroke="#c8c8c8" stroke-width="0.9"/></svg>
<!-- layer list -->
<div class="a" style="left:829px;top:472px;width:186px;height:1px;background:#4a4a4a"></div>
<div class="a" style="left:1006px;top:473px;width:9px;height:85px;background:#4d4d4d"></div>
<div class="a" style="left:829px;top:499px;width:177px;height:1px;background:#484848"></div>
<div class="a" style="left:848px;top:499px;width:158px;height:27px;background:#696969"></div>
<div class="a" style="left:829px;top:527px;width:177px;height:1px;background:#484848"></div>
<div class="a" style="left:829px;top:554px;width:177px;height:1px;background:#484848"></div>
<div class="a" style="left:829px;top:558px;width:186px;height:1px;background:#444"></div>
<!-- eyes -->
<svg class="a" style="left:834px;top:483px" width="10" height="60" fill="#e8e8e8">
 <path d="M0.5 4 Q5 -0.5 9.5 4 Q5 8.5 0.5 4Z"/><circle cx="5" cy="4" r="1.6" fill="#535353"/>
 <path d="M0.5 30.5 Q5 26 9.5 30.5 Q5 35 0.5 30.5Z"/><circle cx="5" cy="30.5" r="1.6" fill="#535353"/>
 <path d="M0.5 57 Q5 52.5 9.5 57 Q5 61.5 0.5 57Z"/><circle cx="5" cy="57" r="1.6" fill="#535353"/>
</svg>
<!-- thumbs -->
<div class="a" style="left:852px;top:476px;width:19px;height:21px;background:repeating-conic-gradient(#dadada 0 25%,#f6f6f6 0 50%) 0 0/4px 4px"></div>
<div class="a" style="left:863px;top:487.5px;width:2.5px;height:2.5px;border-radius:50%;background:#a08080"></div>
<div class="a" style="left:851px;top:501.5px;width:21px;height:22px;background:repeating-conic-gradient(#d8d8d8 0 25%,#f4f4f4 0 50%) 0 0/4px 4px;border:1px solid #3a3a3a"></div>
<svg class="a" style="left:849.5px;top:500.5px" width="24" height="24" fill="none" stroke="#e8e8e8" stroke-width="0.9"><path d="M0.5 5V0.5H5M19 0.5H23.5V5M23.5 19V23.5H19M5 23.5H0.5V19"/></svg>
<div class="a" style="left:857.5px;top:507.5px;width:5px;height:5px;border-radius:50%;background:#f0c048"></div>
<svg class="a" style="left:874px;top:508px" width="6" height="11" fill="none" stroke="#d0d0d0" stroke-width="0.9"><path d="M1 4V2.5A2 2 0 0 1 5 2.5V4M1 6.5V8A2 2 0 0 0 5 8V6.5"/><path d="M3 3.5V7"/></svg>
<div class="a" style="left:882px;top:502.5px;width:21px;height:20.5px;background:#000"></div>
<svg class="a" style="left:882px;top:502.5px" width="21" height="21"><circle cx="8.5" cy="8" r="2.3" fill="#fff"/><g stroke="#fff" stroke-width="0.8"><path d="M8.5 4V12M4.5 8H12.5M5.7 5.2L11.3 10.8M11.3 5.2L5.7 10.8"/></g></svg>
<div class="a" style="left:852px;top:531px;width:19px;height:19px;background:#fff"></div>
<svg class="a" style="left:861px;top:541px" width="11" height="10"><rect x="0" y="0" width="11" height="10" fill="#535353"/><rect x="2" y="2" width="6.5" height="6" fill="none" stroke="#e8e8e8" stroke-width="0.9"/></svg>
<div class="t n" style="left:877px;top:483.01px;font-size:7.4px;color:#e4e4e4;transform:scaleX(0.973)">Layer 1</div>
<div class="t n" style="left:908px;top:509.51px;font-size:7.4px;color:#ececec;transform:scaleX(0.973)">Layer 2</div>
<div class="t n" style="left:877px;top:536.51px;font-size:7.4px;color:#e4e4e4;transform:scaleX(0.973)">Rectangle 1</div>
<!-- bottom icons -->
<svg class="a" style="left:878px;top:560px" width="125" height="13" fill="none" stroke="#bdbdbd" stroke-width="0.9">
 <rect x="2" y="4" width="5" height="4" rx="2" stroke="#8a8a8a"/><rect x="8" y="4" width="5" height="4" rx="2" stroke="#8a8a8a"/>
 <text x="21" y="9.5" font-family="Liberation Serif" font-style="italic" font-size="9" fill="#d8d8d8" stroke="none">fx</text>
 <rect x="39" y="2" width="10" height="8" fill="#d8d8d8" stroke="none"/><circle cx="44" cy="6" r="2.3" fill="#535353" stroke="none"/>
 <circle cx="62" cy="6" r="4"/><path d="M59.2 8.8L64.8 3.2A4 4 0 0 1 59.2 8.8Z" fill="#d8d8d8"/>
 <path d="M74 3H78L79 4H84V10H74Z" fill="#d8d8d8" stroke="none"/>
 <rect x="93" y="1.5" width="9" height="9"/><path d="M97.5 3.5V8.5M95 6H100"/>
 <path d="M111 3H119M113.5 3V2H116.5V3M112 4L113 11H117L118 4Z" fill="#bdbdbd"/>
</svg>
<!-- red highlight box -->
<div class="a" style="left:810px;top:492px;width:210px;height:44px;border:5.5px solid #ac0d0d"></div>


<!-- TOOLS -->
<div id="tools" class="a"></div>
<svg class="a" style="left:15px;top:74px" width="26" height="469"><rect x="0" y="0" width="26" height="9" fill="#4b4b4b"/><path d="M4.5 4 L8 7.5 M8 4 L4.5 7.5" stroke="#d0d0d0" stroke-width="1"/><path d="M17 4 L19 5.8 L17 7.6 M19.5 4 L21.5 5.8 L19.5 7.6" fill="none" stroke="#c0c0c0" stroke-width="0.8"/><rect x="3" y="12" width="1" height="1" fill="#6a6a6a"/><rect x="4" y="14" width="1" height="1" fill="#6a6a6a"/><rect x="5" y="12" width="1" height="1" fill="#6a6a6a"/><rect x="6" y="14" width="1" height="1" fill="#6a6a6a"/><rect x="7" y="12" width="1" height="1" fill="#6a6a6a"/><rect x="8" y="14" width="1" height="1" fill="#6a6a6a"/><rect x="9" y="12" width="1" height="1" fill="#6a6a6a"/><rect x="10" y="14" width="1" height="1" fill="#6a6a6a"/><rect x="11" y="12" width="1" height="1" fill="#6a6a6a"/><rect x="12" y="14" width="1" height="1" fill="#6a6a6a"/><rect x="13" y="12" width="1" height="1" fill="#6a6a6a"/><rect x="14" y="14" width="1" height="1" fill="#6a6a6a"/><rect x="15" y="12" width="1" height="1" fill="#6a6a6a"/><rect x="16" y="14" width="1" height="1" fill="#6a6a6a"/><rect x="17" y="12" width="1" height="1" fill="#6a6a6a"/><rect x="18" y="14" width="1" height="1" fill="#6a6a6a"/><rect x="19" y="12" width="1" height="1" fill="#6a6a6a"/><rect x="20" y="14" width="1" height="1" fill="#6a6a6a"/><rect x="21" y="12" width="1" height="1" fill="#6a6a6a"/><rect x="22" y="14" width="1" height="1" fill="#6a6a6a"/><rect x="23" y="12" width="1" height="1" fill="#6a6a6a"/><rect x="24" y="14" width="1" height="1" fill="#6a6a6a"/><rect x="3.5" y="21" width="19.5" height="15.5" rx="1" fill="#3c3c3c"/><g transform="translate(13,29)"><path d="M0 -4V4 M-4 0H4" stroke="#e6e6e6" stroke-width="0.9"/><path d="M0 -6L1.7 -3.8H-1.7Z M0 6L1.7 3.8H-1.7Z M-6 0L-3.8 1.7V-1.7Z M6 0L3.8 1.7V-1.7Z" fill="#e6e6e6"/></g><path d="M20.5 34 L20.5 36 L18.5 36Z" fill="#bdbdbd"/><g transform="translate(13,46)"><rect x="-5" y="-4.5" width="10" height="9" fill="none" stroke="#e6e6e6" stroke-width="1.1" stroke-dasharray="2 1.3"/></g><path d="M20.5 51 L20.5 53 L18.5 53Z" fill="#bdbdbd"/><g transform="translate(13,63)"><ellipse cx="0.5" cy="-1.5" rx="5" ry="3.5" fill="none" stroke="#e6e6e6" stroke-width="1"/><path d="M-3 1 Q-4 3.5 -2 4.5 Q-1 5 -2.5 6" fill="none" stroke="#e6e6e6" stroke-width="1"/></g><path d="M20.5 68 L20.5 70 L18.5 70Z" fill="#bdbdbd"/><g transform="translate(13,80)"><path d="M-2 -4 A4.5 4.5 0 1 0 1 4" fill="none" stroke="#e6e6e6" stroke-width="1" stroke-dasharray="1.5 1"/><path d="M5 -5 L0 1 Q-1 3 1 3 Q2.5 2 5 -5Z" fill="#e6e6e6"/></g><path d="M20.5 85 L20.5 87 L18.5 87Z" fill="#bdbdbd"/><g transform="translate(13,97)"><path d="M-3 -6V3H6 M-6 -3H3V6" fill="none" stroke="#e6e6e6" stroke-width="1.2"/></g><path d="M20.5 102 L20.5 104 L18.5 104Z" fill="#bdbdbd"/><g transform="translate(13,114)"><rect x="-5" y="-4.5" width="10" height="9" fill="none" stroke="#e6e6e6" stroke-width="1"/><path d="M-5 -4.5L5 4.5M5 -4.5L-5 4.5" fill="none" stroke="#e6e6e6" stroke-width="1"/></g><path d="M20.5 119 L20.5 121 L18.5 121Z" fill="#bdbdbd"/><g transform="translate(13,131)"><path d="M3 -5.5 L5.5 -3 L3.5 -1 L1 -3.5Z" fill="#e6e6e6"/><path d="M1.5 -2 L-4.5 4 L-5.5 5.5 L-4 4.5 L2 -1.5" fill="none" stroke="#e6e6e6" stroke-width="1"/></g><path d="M20.5 136 L20.5 138 L18.5 138Z" fill="#bdbdbd"/><g transform="translate(13,148)"><path d="M-5 2 L2 -5 L5 -2 L-2 5Z" fill="#e6e6e6"/><path d="M-1 -1h1v1h-1z M1 1h1v1h-1z" fill="#535353"/></g><path d="M20.5 153 L20.5 155 L18.5 155Z" fill="#bdbdbd"/><g transform="translate(13,165)"><path d="M4 -5.5 L5.5 -4 L-3 4.5 L-5.5 5.5 L-4.5 3Z" fill="none" stroke="#e6e6e6" stroke-width="1"/></g><path d="M20.5 170 L20.5 172 L18.5 172Z" fill="#bdbdbd"/><g transform="translate(13,182)"><circle cx="0" cy="-3.5" r="2" fill="#e6e6e6"/><rect x="-0.8" y="-2" width="1.6" height="3" fill="#e6e6e6"/><rect x="-5" y="1" width="10" height="2.5" fill="#e6e6e6"/><rect x="-5" y="4.5" width="10" height="1" fill="#e6e6e6"/></g><path d="M20.5 187 L20.5 189 L18.5 189Z" fill="#bdbdbd"/><g transform="translate(13,199)"><path d="M5 -5.5 L-1 1.5 Q-3 4 -4.5 5 Q-1 5 0.5 2.5 L5.5 -5Z" fill="#e6e6e6"/><path d="M-5 -2 Q-3 -4 -1 -3" fill="none" stroke="#e6e6e6" stroke-width="1"/></g><path d="M20.5 204 L20.5 206 L18.5 206Z" fill="#bdbdbd"/><g transform="translate(13,216)"><path d="M2 -5 L5.5 -1.5 L1 3 L-2.5 -0.5Z" fill="#e6e6e6"/><path d="M-2.5 -0.5 L-5 2 L-2 5 L1 3" fill="none" stroke="#e6e6e6" stroke-width="1"/><path d="M-5 5.5H5" fill="none" stroke="#e6e6e6" stroke-width="1"/></g><path d="M20.5 221 L20.5 223 L18.5 223Z" fill="#bdbdbd"/><defs><linearGradient id="gr" x1="0" y1="0" x2="1" y2="1"><stop offset="0" stop-color="#2a2a2a"/><stop offset="1" stop-color="#d8d8d8"/></linearGradient></defs><g transform="translate(13,233)"><rect x="-5" y="-4.5" width="10" height="9" fill="url(#gr)" stroke="#e6e6e6" stroke-width="0.8"/></g><path d="M20.5 238 L20.5 240 L18.5 240Z" fill="#bdbdbd"/><g transform="translate(13,250)"><path d="M0 -6 Q-4.5 0 -4.5 2 A4.5 4.5 0 0 0 4.5 2 Q4.5 0 0 -6Z" fill="#e6e6e6"/></g><path d="M20.5 255 L20.5 257 L18.5 257Z" fill="#bdbdbd"/><g transform="translate(13,267)"><circle cx="1.5" cy="-2" r="3.8" fill="#e6e6e6"/><path d="M-1 1 L-5 5.5" stroke="#e6e6e6" stroke-width="1.4"/></g><path d="M20.5 272 L20.5 274 L18.5 274Z" fill="#bdbdbd"/><g transform="translate(13,284)"><path d="M-5 2 L-1 -5 L5 -1 L-1 5Z" fill="none" stroke="#e6e6e6" stroke-width="1"/><circle cx="0" cy="0" r="1" fill="#e6e6e6"/><path d="M-5 2 L-6 6" fill="none" stroke="#e6e6e6" stroke-width="1"/></g><path d="M20.5 289 L20.5 291 L18.5 291Z" fill="#bdbdbd"/><g transform="translate(13,302)"><path d="M-5 -5.5H5 M0 -5.5V5.5 M-2 5.5H2 M-5 -5.5V-3.5 M5 -5.5V-3.5" fill="none" stroke="#e6e6e6" stroke-width="1.2"/></g><path d="M20.5 307 L20.5 309 L18.5 309Z" fill="#bdbdbd"/><g transform="translate(13,319)"><path d="M-4 -6 L-4 5 L-1 2.5 L1.5 6.5 L3 5.5 L0.5 1.5 L4 1Z" fill="#3a3a3a" stroke="#e6e6e6" stroke-width="0.9"/></g><path d="M20.5 324 L20.5 326 L18.5 326Z" fill="#bdbdbd"/><g transform="translate(13,336)"><rect x="-5.5" y="-4" width="11" height="8" fill="#7a7a7a" stroke="#e6e6e6" stroke-width="0.9"/></g><path d="M20.5 341 L20.5 343 L18.5 343Z" fill="#bdbdbd"/><g transform="translate(13,353)"><path d="M-4.5 1 L-2.5 -1 L-2.5 -5 Q-1.5 -6 -0.5 -5 L-0.5 -1 L0.5 -6 Q1.5 -6.5 2.5 -5.5 L2.5 -1 L3.5 -4.5 Q4.5 -5 5 -4 L5 2 Q4 6 0 6 Q-3 6 -4.5 1Z" fill="#e6e6e6"/></g><path d="M20.5 358 L20.5 360 L18.5 360Z" fill="#bdbdbd"/><g transform="translate(13,370)"><circle cx="1" cy="-1" r="3.8" fill="none" stroke="#e6e6e6" stroke-width="1"/><path d="M-1.8 1.8L-5.5 5.5" stroke="#e6e6e6" stroke-width="1.5"/></g><path d="M20.5 375 L20.5 377 L18.5 377Z" fill="#bdbdbd"/><g transform="translate(13,387)"><circle cx="-4" cy="0" r="1" fill="#e6e6e6"/><circle cx="0" cy="0" r="1" fill="#e6e6e6"/><circle cx="4" cy="0" r="1" fill="#e6e6e6"/></g><path d="M20.5 392 L20.5 394 L18.5 394Z" fill="#bdbdbd"/><rect x="5" y="400" width="5" height="5" fill="#111" stroke="#ddd" stroke-width="0.8"/><rect x="8" y="403" width="4" height="4" fill="#fff"/><path d="M16 398 L20 398 L20 402 M15 398 L17 396.5 M15 398 L17 399.5 M20 404 L18.5 402 M20 404 L21.5 402" fill="none" stroke="#ddd" stroke-width="0.8"/><rect x="10" y="416.5" width="12.5" height="12.5" fill="#fff"/><rect x="4" y="410.5" width="12" height="11.5" fill="#7b5ab6" stroke="#aaa" stroke-width="0.6"/><g transform="translate(13,441)"><rect x="-5.5" y="-3.5" width="11" height="7.5" fill="none" stroke="#e6e6e6" stroke-width="1"/><circle cx="0" cy="0.3" r="2.3" fill="none" stroke="#e6e6e6" stroke-width="0.8" stroke-dasharray="1 1"/></g><g transform="translate(13,458)"><rect x="-2.5" y="-4.5" width="8" height="6" fill="none" stroke="#e6e6e6" stroke-width="1"/><rect x="-5.5" y="-1.5" width="8" height="6" fill="#535353" stroke="#e6e6e6" stroke-width="1"/></g><path d="M20.5 463 L20.5 465 L18.5 465Z" fill="#bdbdbd"/></svg>
</body></html>
